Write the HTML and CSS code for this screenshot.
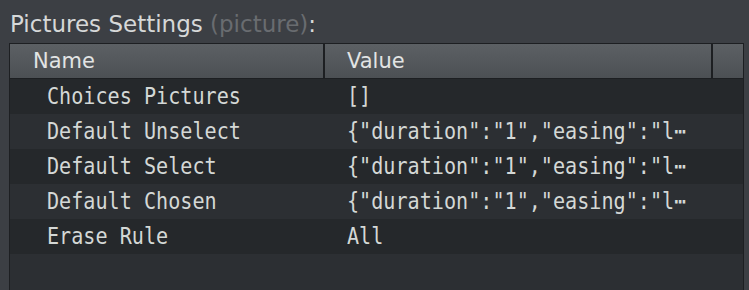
FILE: index.html
```html
<!DOCTYPE html>
<html lang="en">
<head>
  <meta charset="UTF-8">
  <title>Pictures Settings</title>
  <link rel="stylesheet" href="styles.css">
</head>
<body>
  <div class="title">Pictures Settings <span class="muted">(picture)</span>:</div>

  <!-- Property grid -->
  <div class="grid">
    <div class="grid-head">
      <div class="col-name">Name</div>
      <div class="col-value">Value</div>
      <div class="col-rest"></div>
    </div>
    <div class="row">
      <div class="cell-name"><span class="txt">Choices Pictures</span></div>
      <div class="cell-value"><span class="txt">[]</span></div>
    </div>
    <div class="row">
      <div class="cell-name"><span class="txt">Default Unselect</span></div>
      <div class="cell-value"><span class="txt">{"duration":"1","easing":"l⋯</span></div>
    </div>
    <div class="row">
      <div class="cell-name"><span class="txt">Default Select</span></div>
      <div class="cell-value"><span class="txt">{"duration":"1","easing":"l⋯</span></div>
    </div>
    <div class="row">
      <div class="cell-name"><span class="txt">Default Chosen</span></div>
      <div class="cell-value"><span class="txt">{"duration":"1","easing":"l⋯</span></div>
    </div>
    <div class="row">
      <div class="cell-name"><span class="txt">Erase Rule</span></div>
      <div class="cell-value"><span class="txt">All</span></div>
    </div>
    <div class="row filler"></div>
  </div>
</body>
</html>
```

FILE: styles.css
```css
body {
  margin: 0;
  background: #3c3f44;
  font-family: "DejaVu Sans", sans-serif;
  color: #dcdcdc;
  height: 290px;
  overflow: hidden;
}
.title {
  font-size: 23px;
  line-height: 26px;
  padding: 11px 0 0 10px;
  height: 43px;
  box-sizing: border-box;
  color: #d6d8d8;
}
.muted {
  color: #696c70;
}
.grid {
  margin-left: 9px;
  width: 735px;
  height: 247px;
  border: 1px solid #1d1f22;
  border-bottom: none;
  background: #2c2f33;
  box-sizing: border-box;
  overflow: hidden;
}
.grid-head {
  display: flex;
  height: 35px;
  background: linear-gradient(#5c6064, #4c5054);
  border-bottom: 1px solid #1d1f22;
  box-sizing: border-box;
  font-size: 21px;
  color: #e2e4e4;
}
.col-name {
  width: 315px;
  padding-left: 23px;
  border-right: 2px solid #1d1f22;
  line-height: 35px;
  box-sizing: border-box;
}
.col-value {
  width: 388px;
  padding-left: 22px;
  border-right: 2px solid #1d1f22;
  line-height: 35px;
  box-sizing: border-box;
}
.col-rest {
  flex: 1;
}
.row {
  display: flex;
  height: 35px;
  font-family: "DejaVu Sans Mono", monospace;
  font-size: 23px;
  line-height: 35px;
  color: #d4d8d6;
  background: #25282b;
}
.row:nth-child(odd) {
  background: #2c2f33;
}
.cell-name {
  width: 315px;
  padding-left: 37px;
  box-sizing: border-box;
}
.cell-value {
  padding-left: 22px;
  white-space: nowrap;
}
/* the grid font is a narrow mono */
.txt {
  display: inline-block;
  transform: scaleX(0.875);
  transform-origin: left center;
}
```
